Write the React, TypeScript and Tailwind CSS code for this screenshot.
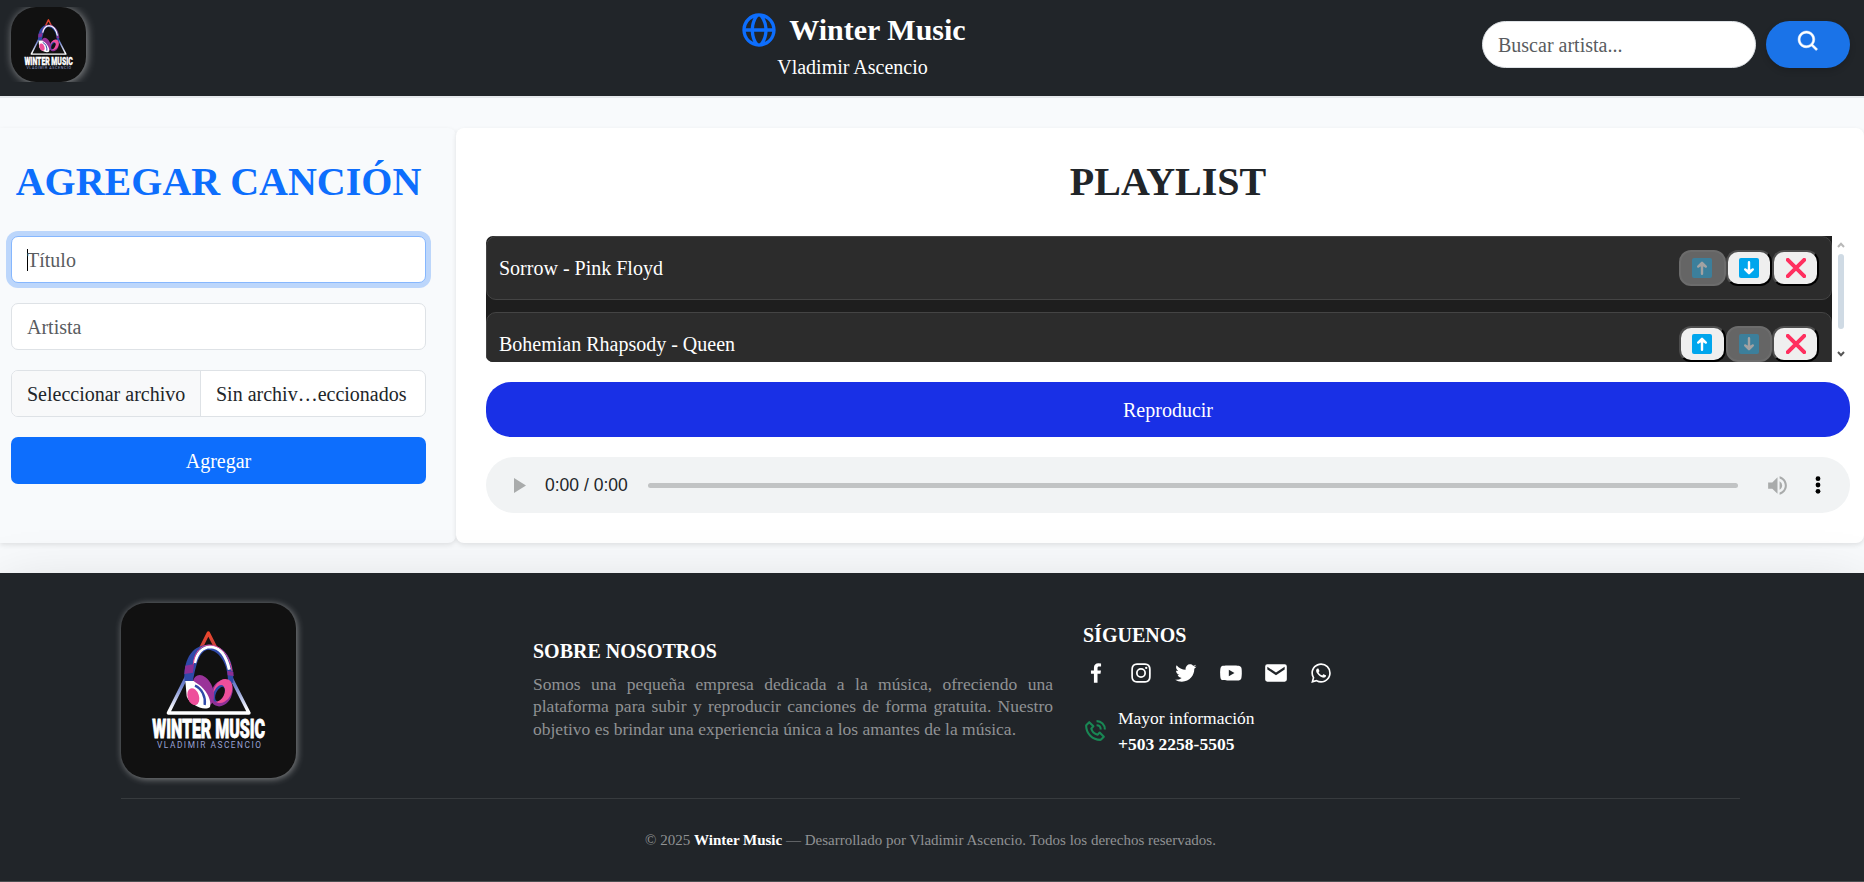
import type { ReactNode } from "react";
import {
  BiGlobe,
  BiSearch,
  BiLogoFacebook,
  BiLogoInstagram,
  BiLogoTwitter,
  BiLogoYoutube,
  BiSolidEnvelope,
  BiLogoWhatsapp,
  BiPhoneCall,
} from "react-icons/bi";
import { MdVolumeUp } from "react-icons/md";

function Logo({ className }: { className: string }) {
  return (
    <svg viewBox="0 0 525 525" className={className}>
      <defs>
        <linearGradient id="tri" x1="0" y1="86" x2="0" y2="334" gradientUnits="userSpaceOnUse">
          <stop offset="0" stopColor="#f0472a" />
          <stop offset="0.18" stopColor="#c9413c" />
          <stop offset="0.4" stopColor="#3c4bab" />
          <stop offset="0.65" stopColor="#6f82cc" />
          <stop offset="0.95" stopColor="#ffffff" />
        </linearGradient>
      </defs>
      <path d="M262 90 L142 330 H384 Z" fill="none" stroke="url(#tri)" strokeWidth="10" strokeLinejoin="round" />
      {/* headband */}
      <path d="M200 232 C202 90 326 90 329 238 Z" fill="#111111" />
      <path d="M191 234 C186 178 208 126 262 125 C314 126 340 172 337 240 L321 236 C322 186 296 142 262 140 C238 142 226 176 216 234 Z" fill="#2f49a8" />
      <path d="M221 180 C228 150 246 132 268 131 C298 132 316 160 325 200" fill="none" stroke="#ffffff" strokeWidth="9" />
      <path d="M217 184 C220 146 240 127 264 126 C304 127 326 160 333 204" fill="none" stroke="#e2468f" strokeWidth="3" />
      <path d="M193 188 L219 183 L216 209 L190 213 Z" fill="#8b2f96" />
      <path d="M319 203 L337 206 L338 219 L320 217 Z" fill="#8b2f96" />
      {/* right cup */}
      <ellipse cx="302" cy="270" rx="31" ry="42" transform="rotate(26 302 270)" fill="#8e3097" />
      <ellipse cx="305" cy="264" rx="27" ry="38" transform="rotate(26 305 264)" fill="#ee4f9b" />
      <ellipse cx="293" cy="271" rx="15" ry="27" transform="rotate(26 293 271)" fill="#2f49a8" />
      <ellipse cx="297" cy="273" rx="12" ry="23" transform="rotate(26 297 273)" fill="#111111" />
      {/* left cup */}
      <ellipse cx="247" cy="262" rx="29" ry="48" transform="rotate(-22 247 262)" fill="#9a3399" />
      <path d="M193 234 L218 234 C224 240 232 242 240 250 C260 268 272 296 267 312 C250 326 206 306 197 280 Z" fill="#ffffff" />
      <path d="M222 248 C242 256 255 282 251 306" fill="none" stroke="#2f49a8" strokeWidth="7" />
      <ellipse cx="217" cy="281" rx="17" ry="26" transform="rotate(-18 217 281)" fill="#ee4f9b" />
      <g transform="translate(94 404) scale(0.64 1)">
        <text textLength="528" fill="#ffffff" stroke="#ffffff" strokeWidth="2.5" fontSize="75" className="font-[Roboto,sans-serif] font-black">
          WINTER MUSIC
        </text>
      </g>
      <text x="108" y="434" textLength="312" fontSize="25" fill="#9aa2d6" className="font-[Roboto,sans-serif]">
        VLADIMIR ASCENCIO
      </text>
    </svg>
  );
}

function ArrowTile({ down = false }: { down?: boolean }) {
  return (
    <svg viewBox="0 0 20 20" className={down ? "size-5 rotate-180" : "size-5"}>
      <rect width="20" height="20" rx="2" fill="#00a6ed" />
      <path d="M10 15.8 V6 M6.2 8.6 L10 4.8 L13.8 8.6" fill="none" stroke="#fff" strokeWidth="2.4" strokeLinecap="round" strokeLinejoin="round" />
      <path d="M6.4 8.6 L10 5 L13.6 8.6 Z" fill="#fff" />
    </svg>
  );
}

function Cross() {
  return (
    <svg viewBox="0 0 20 20" className="size-5">
      <path d="M1.8 1.8 L18.2 18.2 M18.2 1.8 L1.8 18.2" stroke="#ff2f5f" strokeWidth="4" strokeLinecap="round" />
    </svg>
  );
}

function RowButton({ disabled = false, label, children }: { disabled?: boolean; label: string; children: ReactNode }) {
  return (
    <button
      aria-label={label}
      disabled={disabled}
      className={
        disabled
          ? "flex h-9 w-[46.75px] items-center justify-center rounded-[12px] border-2 border-[#6c6c6c] bg-[#656565]"
          : "flex h-9 w-[46.75px] items-center justify-center rounded-[12px] border-2 border-t-[#4d4d4d] border-l-[#4d4d4d] border-r-black border-b-black bg-[#efefef]"
      }
    >
      <span className={disabled ? "opacity-40" : ""}>{children}</span>
    </button>
  );
}

function Song({ name, first = false, last = false }: { name: string; first?: boolean; last?: boolean }) {
  return (
    <li className="flex h-16 shrink-0 items-center justify-between rounded-[10px] border border-[#444] bg-[#2c2c2c] px-3 text-white">
      <span>{name}</span>
      <div className="flex">
        <RowButton label="Subir" disabled={first}>
          <ArrowTile />
        </RowButton>
        <RowButton label="Bajar" disabled={last}>
          <ArrowTile down />
        </RowButton>
        <RowButton label="Eliminar">
          <Cross />
        </RowButton>
      </div>
    </li>
  );
}

export default function App() {
  return (
    <div className="flex h-[882px] flex-col overflow-hidden bg-[#f8fafc] font-['Liberation_Serif',serif] text-[20px] leading-[30px] text-[#212529]">
      <header className="flex h-24 shrink-0 bg-[#212529] text-white shadow-[0_2px_0_#e6e9ec]">
        <div className="w-[223px]">
          <div className="mt-[7px] h-[75px] overflow-hidden pl-[11px]">
            <div className="size-[75px] rounded-[25px] bg-[#111] shadow-[1px_1px_8px_rgba(255,255,255,0.5)]">
              <Logo className="size-[75px]" />
            </div>
          </div>
        </div>
        <div className="flex flex-1 flex-col items-center pt-[11px]">
          <h1 className="flex h-[38px] items-center gap-[10px] text-[30px] font-bold">
            <BiGlobe className="size-10 text-[#0d6efd]" />
            Winter Music
          </h1>
          <p className="mt-[3px]">Vladimir Ascencio</p>
        </div>
        <div className="flex gap-[10px] pt-[21px] pr-[14px]">
          <input
            placeholder="Buscar artista..."
            className="h-[47px] w-[274px] rounded-[25px] border border-[#dee2e6] bg-white px-[15px] pt-[2px] placeholder:text-[#595c5f]"
          />
          <button aria-label="Buscar" className="flex h-[47px] w-[84px] justify-center rounded-[25px] bg-[#1a73e8] pt-2 shadow-[0_3px_6px_rgba(0,0,0,0.15)]">
            <BiSearch className="size-[25px] stroke-[0.5px] stroke-white" />
          </button>
        </div>
      </header>

      <main className="mt-8 flex h-[415px] shrink-0">
        <section className="w-[456px] shrink-0 rounded-r-lg bg-[#f8fafc] pt-[30px] pr-[30px] pl-[11px] shadow-[0_2px_5px_rgba(0,0,0,0.1)]">
          <h2 className="flex h-12 items-center justify-center text-[40px] font-bold whitespace-nowrap text-[#0d6efd]">AGREGAR CANCIÓN</h2>
          <form className="mt-[30px] flex flex-col gap-5">
            <div className="flex h-[47px] items-center rounded-[7px] border border-[#86b7fe] bg-white px-[15px] text-[#595c5f] shadow-[0_0_0_5px_#bcd6fb]">
              <span className="-mr-px h-[22px] w-px bg-black" />
              <span>Título</span>
            </div>
            <div className="flex h-[47px] items-center rounded-[7px] border border-[#dee2e6] bg-white px-[15px] pt-px text-[#595c5f]">Artista</div>
            <div className="flex h-[47px] items-stretch overflow-hidden rounded-[7px] border border-[#dee2e6] bg-white whitespace-nowrap">
              <span className="flex w-[189px] items-center border-r border-[#dee2e6] bg-[#f8f9fa] pl-[15px]">Seleccionar archivo</span>
              <span className="flex items-center pl-[15px]">Sin archiv…eccionados</span>
            </div>
            <button type="button" className="h-[47px] rounded-[7px] bg-[#0d6efd] text-white">
              Agregar
            </button>
          </form>
        </section>

        <section className="min-w-0 flex-1 rounded-lg bg-white pt-[30px] pr-[14px] pl-[30px] shadow-[0_2px_5px_rgba(0,0,0,0.1)]">
          <h2 className="flex h-12 items-center justify-center text-[40px] font-bold">PLAYLIST</h2>
          <div className="mt-[30px] flex h-[126px] overflow-hidden rounded-[7px]">
            <ul className="flex w-[1346px] shrink-0 flex-col gap-3 bg-[#1e1e1e]">
              <Song name="Sorrow - Pink Floyd" first />
              <Song name="Bohemian Rhapsody - Queen" last />
            </ul>
            <div className="flex flex-1 flex-col items-center pt-[6px]">
              <svg viewBox="0 0 8 6" className="h-[6px] w-[8px]">
                <path d="M1 5 L4 1.8 L7 5" fill="none" stroke="#b8b8b8" strokeWidth="2" />
              </svg>
              <div className="mt-[6px] h-[75px] w-[6px] rounded-full bg-[#cfdae4]" />
              <svg viewBox="0 0 8 6" className="mt-[22px] h-[6px] w-[8px]">
                <path d="M1 1 L4 4.2 L7 1" fill="none" stroke="#555" strokeWidth="2" />
              </svg>
            </div>
          </div>
          <button className="mt-5 block h-[55px] w-full rounded-[25px] bg-[#1930e6] text-white">Reproducir</button>
          <div className="mt-5 flex h-14 items-center rounded-full bg-[#f1f3f4] pl-7 font-['Liberation_Sans',sans-serif] text-[17.5px]">
            <svg viewBox="0 0 12 15" className="h-[15px] w-[12px]">
              <path d="M0 0 L12 7.5 L0 15 Z" fill="#a9abab" />
            </svg>
            <span className="w-[103px] pl-[19px] whitespace-nowrap">0:00 / 0:00</span>
            <div className="ml-[19px] h-[5px] w-[1090px] rounded-full bg-[#c1c3c4]" />
            <MdVolumeUp className="ml-[27px] size-[25px] text-[#a9abab]" />
            <svg viewBox="0 0 6 18" className="ml-[25px] h-[18px] w-[6px]">
              <circle cx="3" cy="2.7" r="2.4" />
              <circle cx="3" cy="9" r="2.4" />
              <circle cx="3" cy="15.3" r="2.4" />
            </svg>
          </div>
        </section>
      </main>

      <footer className="relative mt-[30px] h-[309px] shrink-0 border-b border-[#4b4e51] bg-[#212529] pt-[30px] pr-[124px] pl-[121px] text-white shadow-[0_20px_60px_rgba(0,0,0,0.175)]">
        <div className="flex h-[175px] items-center">
          <div className="size-[175px] rounded-[25px] bg-[#111] shadow-[1px_1px_7px_rgba(255,255,255,0.45)]">
            <Logo className="size-[175px]" />
          </div>
          <div className="-mt-px ml-[237px] w-[520px]">
            <h3 className="-mt-px leading-6 font-bold">SOBRE NOSOTROS</h3>
            <p className="mt-[10px] text-justify text-[17.5px] leading-[22.5px] text-[#909294]">
              Somos una pequeña empresa dedicada a la música, ofreciendo una plataforma para subir y reproducir canciones de forma gratuita. Nuestro objetivo es
              brindar una experiencia única a los amantes de la música.
            </p>
          </div>
          <div className="-mt-[2px] ml-[30px]">
            <h3 className="leading-6 font-bold">SÍGUENOS</h3>
            <div className="mt-[13px] flex gap-[19px] text-[26px]">
              <BiLogoFacebook />
              <BiLogoInstagram />
              <BiLogoTwitter />
              <BiLogoYoutube />
              <BiSolidEnvelope />
              <BiLogoWhatsapp />
            </div>
            <div className="mt-[19px] flex items-center gap-[10px]">
              <BiPhoneCall className="size-[25px] text-[#198754]" />
              <p className="text-[17.5px] leading-[26px]">
                Mayor información
                <br />
                <b>+503 2258-5505</b>
              </p>
            </div>
          </div>
        </div>
        <div className="mt-5 border-t border-[#373b3e] pt-[30px] text-center text-[15px] leading-[22px] text-[#909294]">
          © 2025 <b className="text-white">Winter Music</b> — Desarrollado por Vladimir Ascencio. Todos los derechos reservados.
        </div>
      </footer>
    </div>
  );
}
